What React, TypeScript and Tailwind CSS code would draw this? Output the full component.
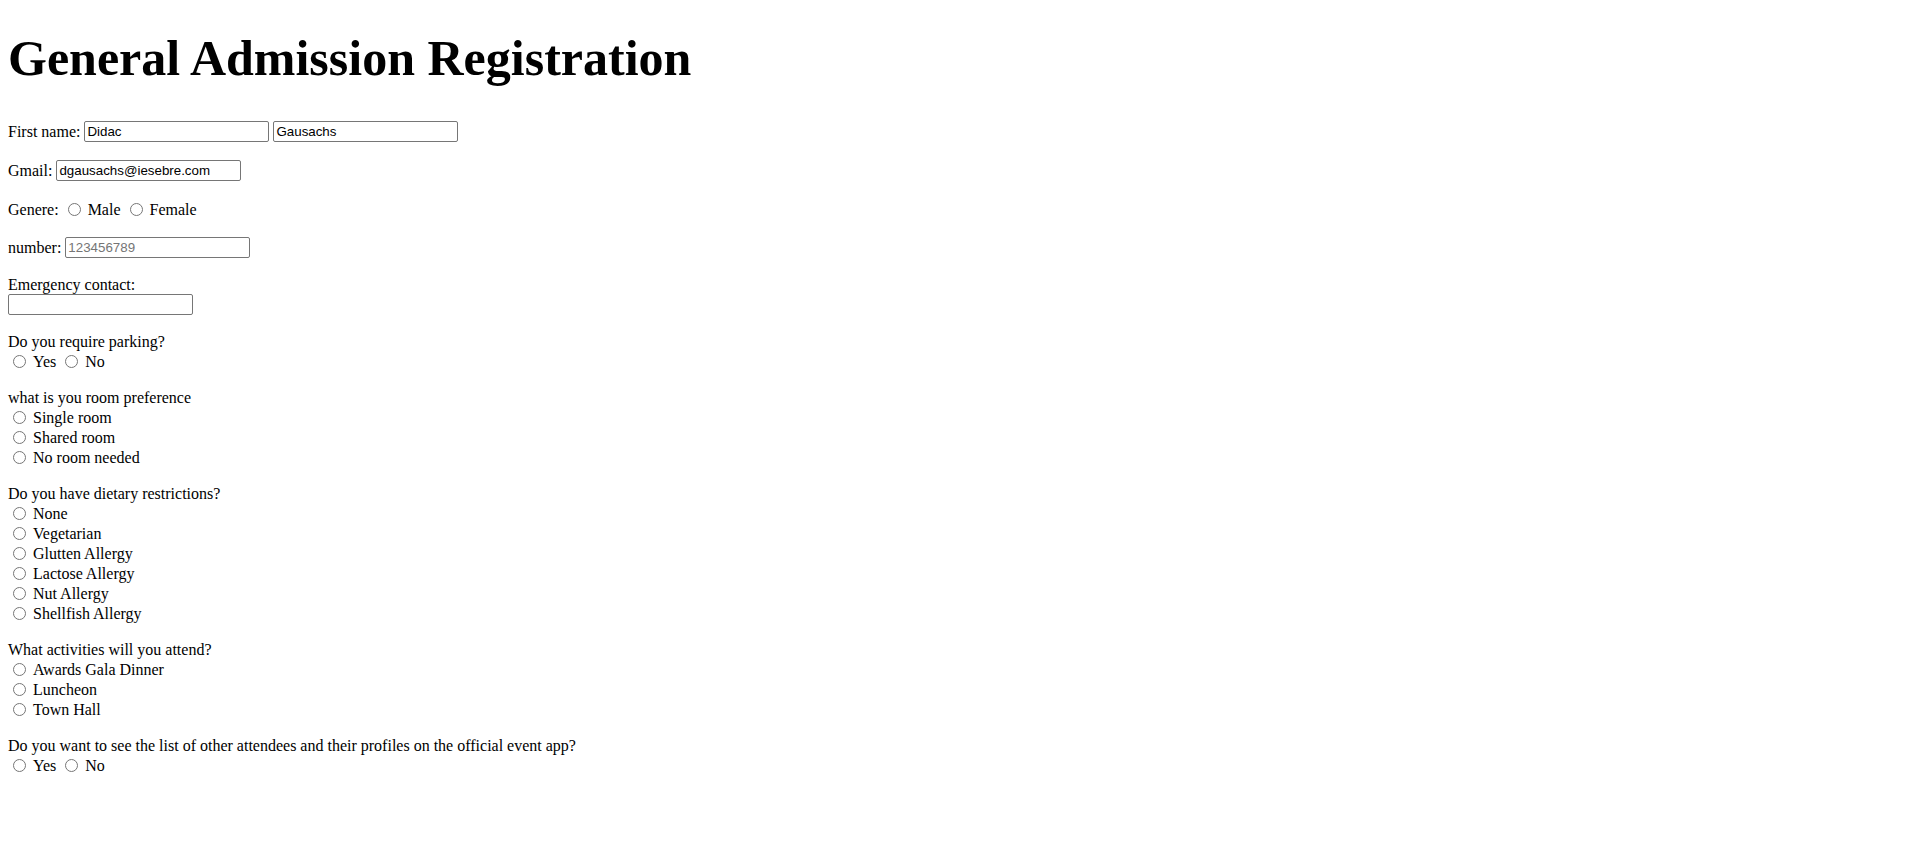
import { useState } from 'react';

const inputClass =
  "w-[185px] h-[21px] border border-[#767676] rounded-[2px] px-[2px] py-[1px] bg-white text-black text-[13.333px] leading-[17px] font-['Liberation_Sans',Arial,sans-serif] outline-none placeholder:text-[#757575]";

type RadioProps = {
  name: string;
  label: string;
  first?: boolean;
  value: string;
  onChange: (v: string) => void;
  checked: boolean;
};

const Radio = ({ name, label, first, value, onChange, checked }: RadioProps) => (
  <>
    <input
      type="radio"
      name={name}
      checked={checked}
      onChange={() => onChange(value)}
      className={`w-[13px] h-[13px] m-0 mb-[2px] mr-[7px] shrink-0 ${first ? 'ml-[5px]' : 'ml-[9px]'}`}
    />
    <span>{label}</span>
  </>
);

const RadioGroup = ({
  name,
  question,
  options,
  inline,
  className = 'mt-4',
}: {
  name: string;
  question: string;
  options: string[];
  inline?: boolean;
  className?: string;
}) => {
  const [value, setValue] = useState('');
  return (
    <div className={className}>
      <div className="h-[20px] flex items-center">{question}</div>
      {inline ? (
        <div className="h-[20px] flex items-center">
          {options.map((o, i) => (
            <Radio
              key={o}
              name={name}
              label={o}
              value={o}
              first={i === 0}
              checked={value === o}
              onChange={setValue}
            />
          ))}
        </div>
      ) : (
        options.map((o) => (
          <div key={o} className="h-[20px] flex items-center">
            <Radio name={name} label={o} value={o} first checked={value === o} onChange={setValue} />
          </div>
        ))
      )}
    </div>
  );
};

export default function App() {
  const [gender, setGender] = useState('');

  return (
    <div className="min-h-screen bg-white text-black px-2 pt-px pb-8 font-['Liberation_Serif','Times_New_Roman',serif] text-[16px]">
      <h1 className="mt-[29px] mb-[34px] text-[50px] leading-[57px] font-bold">General Admission Registration</h1>

      <form className="flex flex-col" onSubmit={(e) => e.preventDefault()}>
        {/* Name */}
        <div className="h-[21px] flex items-center gap-[4px]">
          <span>First name:</span>
          <input type="text" defaultValue="Didac" className={inputClass} />
          <input type="text" defaultValue="Gausachs" className={inputClass} />
        </div>

        <div className="mt-[18px] h-[21px] flex items-center gap-[4px]">
          <span>Gmail:</span>
          <input type="email" defaultValue="dgausachs@iesebre.com" className={inputClass} />
        </div>

        <div className="mt-[19px] h-[20px] flex items-center">
          <span>Genere:</span>
          <Radio name="genere" label="Male" value="male" checked={gender === 'male'} onChange={setGender} />
          <Radio name="genere" label="Female" value="female" checked={gender === 'female'} onChange={setGender} />
        </div>

        <div className="mt-[17px] h-[21px] flex items-center gap-[4px]">
          <span>number:</span>
          <input type="tel" placeholder="123456789" className={inputClass} />
        </div>

        {/* Emergency */}
        <div className="mt-[17px]">
          <div className="h-[19px] flex items-center">Emergency contact:</div>
          <div className="h-[21px] flex items-center">
            <input type="text" className={inputClass} />
          </div>
        </div>

        <RadioGroup
          name="parking"
          question="Do you require parking?"
          options={['Yes', 'No']}
          inline
          className="mt-[17px]"
        />

        <RadioGroup
          name="room"
          question="what is you room preference"
          options={['Single room', 'Shared room', 'No room needed']}
        />

        <RadioGroup
          name="diet"
          question="Do you have dietary restrictions?"
          options={['None', 'Vegetarian', 'Glutten Allergy', 'Lactose Allergy', 'Nut Allergy', 'Shellfish Allergy']}
        />

        <RadioGroup
          name="activities"
          question="What activities will you attend?"
          options={['Awards Gala Dinner', 'Luncheon', 'Town Hall']}
        />

        <RadioGroup
          name="attendees"
          question="Do you want to see the list of other attendees and their profiles on the official event app?"
          options={['Yes', 'No']}
          inline
        />
      </form>
    </div>
  );
}
